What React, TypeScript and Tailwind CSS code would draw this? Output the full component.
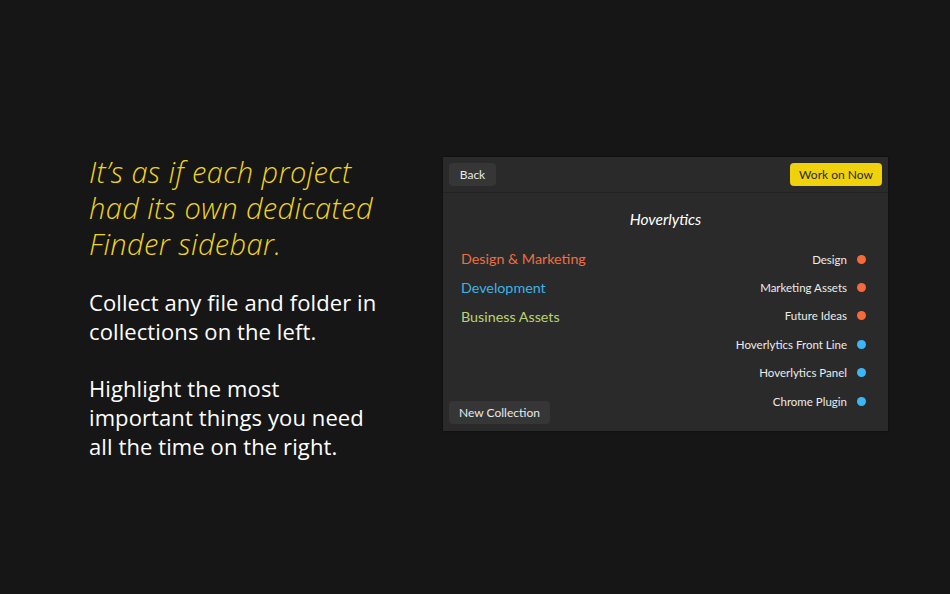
import React from "react";

const left = [
  { label: "Design & Marketing", color: "text-[#ee6e45]" },
  { label: "Development", color: "text-[#3eb3e6]" },
  { label: "Business Assets", color: "text-[#bcd272]" },
];

const right = [
  { label: "Design", dot: "bg-[#f5693b]" },
  { label: "Marketing Assets", dot: "bg-[#f5693b]" },
  { label: "Future Ideas", dot: "bg-[#f5693b]" },
  { label: "Hoverlytics Front Line", dot: "bg-[#3cb7f5]" },
  { label: "Hoverlytics Panel", dot: "bg-[#3cb7f5]" },
  { label: "Chrome Plugin", dot: "bg-[#3cb7f5]" },
];

export default function App() {
  return (
    <div
      className="w-[950px] h-[594px] bg-[#161616] flex overflow-hidden"
      style={{ fontFamily: "Lato, 'Open Sans', sans-serif" }}
    >
      <div
        className="w-[443px] pl-[89px] pt-[154px] shrink-0 whitespace-nowrap"
        style={{ fontFamily: "'Open Sans', Lato, sans-serif" }}
      >
        <div className="text-[#f1d51c] italic text-[29px] leading-[36px] font-light tracking-[0.4px]">
          It’s as if each project
          <br />
          had its own dedicated
          <br />
          Finder sidebar.
        </div>
        <div className="mt-[26px] text-white text-[22px] leading-[29px] tracking-[0.1px]">
          Collect any file and folder in
          <br />
          collections on the left.
        </div>
        <div className="mt-[28px] text-white text-[22px] leading-[29px] tracking-[0.1px]">
          Highlight the most
          <br />
          important things you need
          <br />
          all the time on the right.
        </div>
      </div>

      <div className="mt-[157px] w-[445px] h-[274px] bg-[#2a2a2a] flex flex-col shadow-[0_0_2px_rgba(0,0,0,0.6)]">
        <div className="h-[36px] border-b border-[#222222] flex items-center justify-between px-[6px] shrink-0">
          <button className="h-[23px] w-[47px] rounded-[4px] bg-[#363636] text-[#e8e8e8] text-[12px] flex items-center justify-center">
            Back
          </button>
          <button className="h-[23px] w-[92px] rounded-[4px] bg-[#f0d20c] text-[#2a2a2a] text-[12px] flex items-center justify-center">
            Work on Now
          </button>
        </div>
        <div className="flex-1 flex flex-col">
          <div className="mt-[16px] h-[20px] leading-[20px] text-center text-white italic text-[15.5px]">
            Hoverlytics
          </div>
          <div className="flex-1 flex">
            <div className="flex-1 flex flex-col justify-between pl-[6px] pb-[7px] pt-[15px]">
              <div className="flex flex-col pl-[12px]">
                {left.map((l) => (
                  <div key={l.label} className={`h-[29px] leading-[29px] text-[14.3px] ${l.color}`}>
                    {l.label}
                  </div>
                ))}
              </div>
              <button className="self-start h-[23px] w-[101px] rounded-[4px] bg-[#363636] text-[#e8e8e8] text-[12px] flex items-center justify-center">
                New Collection
              </button>
            </div>
            <div className="flex flex-col items-end pr-[22px] pt-[16px]">
              {right.map((r) => (
                <div key={r.label} className="h-[28.4px] flex items-center gap-[10px]">
                  <span className="text-[11.5px] text-[#ececec]">{r.label}</span>
                  <span className={`w-[9px] h-[9px] rounded-full ${r.dot}`} />
                </div>
              ))}
            </div>
          </div>
        </div>
      </div>
    </div>
  );
}
